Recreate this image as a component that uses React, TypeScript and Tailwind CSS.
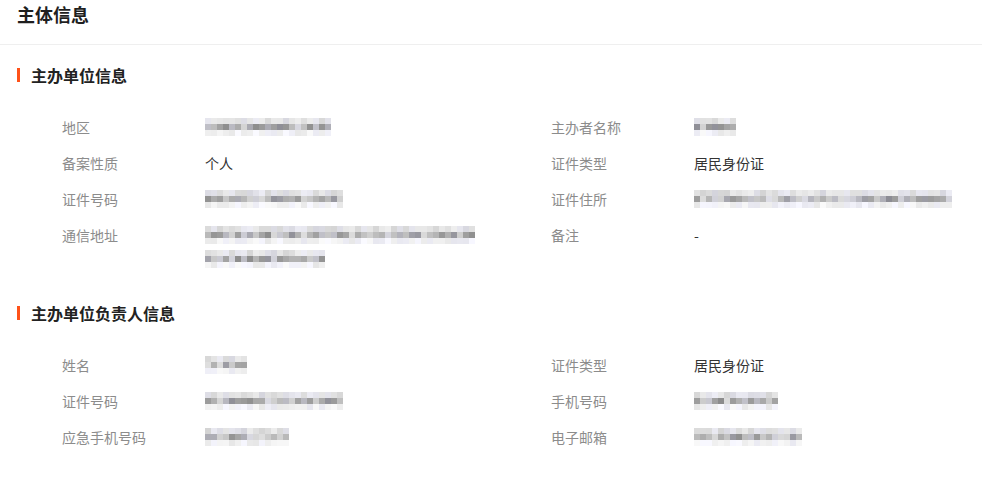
import React from 'react';

const font = { fontFamily: '"Noto Sans CJK SC", "Noto Sans", sans-serif' };

// pseudo random from seed so the blur looks the same every run
function rand(seed: number) {
  let s = seed * 7919 + 13;
  return () => {
    s = (s * 16807) % 2147483647;
    return s / 2147483647;
  };
}

function Mosaic({ width, seed }: { width: number; seed: number }) {
  const cols = Math.round(width / 6);
  const r = rand(seed);
  const rows = [
    [212, 238],
    [140, 222],
    [230, 250],
  ];
  return (
    <div className="flex flex-col mt-[2px]" style={{ width }}>
      {rows.map(([lo, hi], ri) => (
        <div key={ri} className="flex h-[6px]">
          {Array.from({ length: cols }).map((_, ci) => {
            const v = Math.round(lo + r() * (hi - lo));
            const tint = r() > 0.6 ? 8 : 0;
            return (
              <div
                key={ci}
                className="h-[6px] w-[6px]"
                style={{ background: `rgb(${v},${v},${Math.min(255, v + tint)})` }}
              />
            );
          })}
        </div>
      ))}
    </div>
  );
}

type Val = string | { m: number[]; seed: number };

function Field({ label, value }: { label: string; value: Val }) {
  return (
    <div className="flex">
      <div className="w-[143px] shrink-0 text-[14px] leading-[22px] text-[#8c8c8c]">{label}</div>
      <div className="text-[14px] leading-[22px] text-[#333]">
        {typeof value === 'string' ? (
          value
        ) : (
          <div className="flex flex-col gap-[4px]">
            {value.m.map((w, i) => (
              <Mosaic key={i} width={w} seed={value.seed + i * 17} />
            ))}
          </div>
        )}
      </div>
    </div>
  );
}

function SectionTitle({ text }: { text: string }) {
  return (
    <div className="flex items-center pl-[17px] h-[22px]">
      <div className="w-[3px] h-[14px] bg-[#ff5219] mr-[11px]" />
      <span className="text-[16px] font-bold text-[#222]">{text}</span>
    </div>
  );
}

export default function App() {
  const section1: [string, Val][] = [
    ['地区', { m: [126], seed: 11 }],
    ['主办者名称', { m: [44], seed: 23 }],
    ['备案性质', '个人'],
    ['证件类型', '居民身份证'],
    ['证件号码', { m: [138], seed: 37 }],
    ['证件住所', { m: [258], seed: 41 }],
    ['通信地址', { m: [270, 120], seed: 53 }],
    ['备注', '-'],
  ];
  const section2: [string, Val][] = [
    ['姓名', { m: [42], seed: 67 }],
    ['证件类型', '居民身份证'],
    ['证件号码', { m: [138], seed: 71 }],
    ['手机号码', { m: [84], seed: 83 }],
    ['应急手机号码', { m: [84], seed: 97 }],
    ['电子邮箱', { m: [108], seed: 101 }],
  ];

  return (
    <div className="w-[982px] h-[482px] bg-white overflow-hidden" style={font}>
      <div className="h-[45px] border-b border-[#efefef] pl-[17px]">
        <h1 className="text-[18px] leading-[28px] font-bold text-[#1f1f1f]">主体信息</h1>
      </div>

      <div className="mt-[19px]">
        <SectionTitle text="主办单位信息" />
        <div className="grid grid-cols-[489px_1fr] gap-y-[14px] pl-[62px] mt-[30px]">
          {section1.map(([l, v], i) => (
            <Field key={i} label={l} value={v} />
          ))}
        </div>
      </div>

      <div className="mt-[34px]">
        <SectionTitle text="主办单位负责人信息" />
        <div className="grid grid-cols-[489px_1fr] gap-y-[14px] pl-[62px] mt-[30px]">
          {section2.map(([l, v], i) => (
            <Field key={i} label={l} value={v} />
          ))}
        </div>
      </div>
    </div>
  );
}
